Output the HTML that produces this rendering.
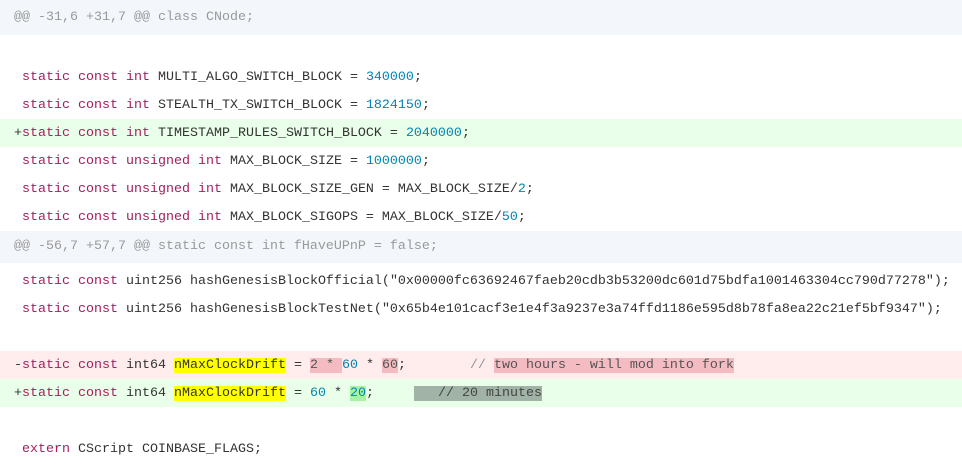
<!DOCTYPE html>
<html><head><meta charset="utf-8"><style>
body{margin:0;width:962px;height:468px;background:#fff;overflow:hidden;font-family:"Liberation Mono",monospace;font-size:13.33px;color:#333}
.r{position:absolute;left:0;width:962px;height:28px;line-height:30px;white-space:pre;padding-left:14px;box-sizing:border-box}
.h{background:#f3f7fc;color:#999}
.a{background:#eaffea}.d{background:#ffecec}
.k{color:#a71d5d}.n{color:#0086b3}.s{color:#333}.c{color:#969896}
.y{background:#ffff00}.dr{background:#f4bcc2;color:#555}.ag{background:#a6f3a6}.gb{background:#a1b3a6;color:#444}
</style></head><body>
<div class="r h" style="top:0;height:35px;line-height:36px">@@ -31,6 +31,7 @@ class CNode;</div>
<div class="r" style="top:63px"> <span class="k">static const int</span> MULTI_ALGO_SWITCH_BLOCK = <span class="n">340000</span>;</div>
<div class="r" style="top:91px"> <span class="k">static const int</span> STEALTH_TX_SWITCH_BLOCK = <span class="n">1824150</span>;</div>
<div class="r a" style="top:119px">+<span class="k">static const int</span> TIMESTAMP_RULES_SWITCH_BLOCK = <span class="n">2040000</span>;</div>
<div class="r" style="top:147px"> <span class="k">static const unsigned int</span> MAX_BLOCK_SIZE = <span class="n">1000000</span>;</div>
<div class="r" style="top:175px"> <span class="k">static const unsigned int</span> MAX_BLOCK_SIZE_GEN = MAX_BLOCK_SIZE/<span class="n">2</span>;</div>
<div class="r" style="top:203px"> <span class="k">static const unsigned int</span> MAX_BLOCK_SIGOPS = MAX_BLOCK_SIZE/<span class="n">50</span>;</div>
<div class="r h" style="top:231px;height:32px;line-height:31px">@@ -56,7 +57,7 @@ static const int fHaveUPnP = false;</div>
<div class="r" style="top:267px"> <span class="k">static const</span> uint256 hashGenesisBlockOfficial(<span class="s">"0x00000fc63692467faeb20cdb3b53200dc601d75bdfa1001463304cc790d77278"</span>);</div>
<div class="r" style="top:295px"> <span class="k">static const</span> uint256 hashGenesisBlockTestNet(<span class="s">"0x65b4e101cacf3e1e4f3a9237e3a74ffd1186e595d8b78fa8ea22c21ef5bf9347"</span>);</div>
<div class="r d" style="top:351px">-<span class="k">static const</span> int64 <span class="y">nMaxClockDrift</span> = <span class="dr">2 * </span><span class="n">60</span> * <span class="n dr">60</span>;        <span class="c">// <span class="dr">two hours - will mod into fork</span></span></div>
<div class="r a" style="top:379px">+<span class="k">static const</span> int64 <span class="y">nMaxClockDrift</span> = <span class="n">60</span> * <span class="n ag">20</span>;     <span class="gb">   // 20 minutes</span></div>
<div class="r" style="top:435px"> <span class="k">extern</span> CScript COINBASE_FLAGS;</div>
</body></html>
